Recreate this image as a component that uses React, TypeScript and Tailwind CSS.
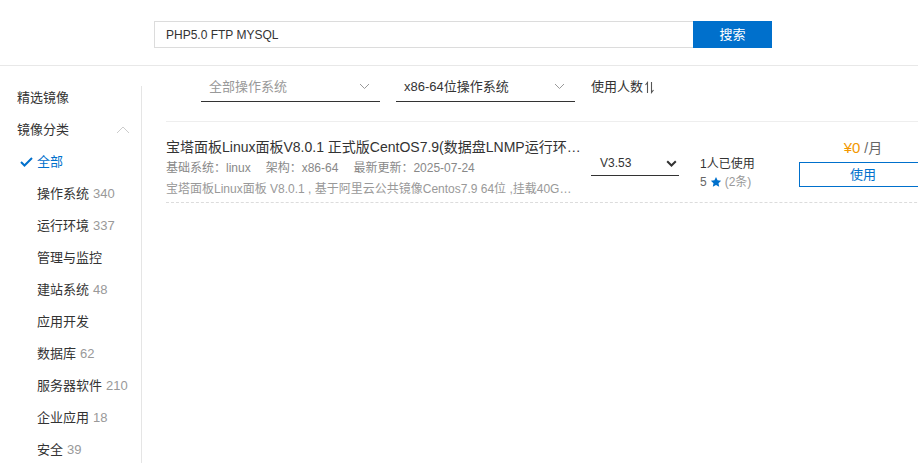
import React from 'react';

const categories = [
  { name: '操作系统', count: 340 },
  { name: '运行环境', count: 337 },
  { name: '管理与监控' },
  { name: '建站系统', count: 48 },
  { name: '应用开发' },
  { name: '数据库', count: 62 },
  { name: '服务器软件', count: 210 },
  { name: '企业应用', count: 18 },
  { name: '安全', count: 39 },
];

function ThinChevron({ className = '' }: { className?: string }) {
  return (
    <svg width="11" height="7" viewBox="0 0 11 7" className={className}>
      <path d="M1 1l4.5 4.5L10 1" fill="none" stroke="#999" strokeWidth="1" />
    </svg>
  );
}

function SortIcon() {
  return (
    <svg width="9" height="13" viewBox="0 0 9 13" className="ml-[2px]">
      <path d="M2.5 12V1.5L0.5 4" fill="none" stroke="#555" strokeWidth="1.1" />
      <path d="M6.5 1v10.5L8.5 9" fill="none" stroke="#555" strokeWidth="1.1" />
    </svg>
  );
}

export default function App() {
  return (
    <div
      className="w-[918px] h-[463px] overflow-hidden bg-white text-[#333]"
      style={{ fontFamily: '"Liberation Sans", "Noto Sans CJK SC", sans-serif' }}
    >
      {/* Search header */}
      <div className="h-[66px] border-b border-[#e8e8e8] pt-[21px] pl-[154px]">
        <div className="flex h-[27px] w-[618px]">
          <div className="flex-1 border border-[#dcdcdc] border-r-0 flex items-center pl-[11px] text-[12px] text-[#333]">
            PHP5.0 FTP MYSQL
          </div>
          <button className="w-[79px] h-full bg-[#0070cc] text-white text-[13px]">搜索</button>
        </div>
      </div>

      <div className="flex">
        {/* Sidebar */}
        <div className="w-[142px] shrink-0 mt-5 h-[400px] border-r border-[#e5e5e5]">
          <div className="-mt-1 text-[13px]">
            <div className="h-8 flex items-center pl-[17px]">精选镜像</div>
            <div className="h-8 flex items-center justify-between pl-[17px] pr-[11px]">
              <span>镜像分类</span>
              <svg width="14" height="8" viewBox="0 0 14 8">
                <path d="M1 7l6-6 6 6" fill="none" stroke="#ccc" strokeWidth="1" />
              </svg>
            </div>
            <div className="h-8 flex items-center pl-[20px] text-[#0070cc]">
              <svg width="13" height="10" viewBox="0 0 13 10" className="mr-[4px]">
                <path d="M1 5l3.5 3.5L12 1" fill="none" stroke="#0070cc" strokeWidth="2" />
              </svg>
              全部
            </div>
            {categories.map((c) => (
              <div key={c.name} className="h-8 flex items-center pl-[37px]">
                {c.name}
                {c.count !== undefined && <span className="ml-[4px] text-[#999]">{c.count}</span>}
              </div>
            ))}
          </div>
        </div>

        {/* Main */}
        <div className="w-[820px] shrink-0 pl-6">
          {/* Filters */}
          <div className="flex items-start h-[55px] pt-[6px] pl-[35px]">
            <div className="w-[179px] h-[30px] border-b border-[#333] flex items-center justify-between pl-[8px] pr-[10px] text-[13px] text-[#999]">
              <span>全部操作系统</span>
              <ThinChevron />
            </div>
            <div className="ml-[16px] w-[179px] h-[30px] border-b border-[#333] flex items-center justify-between pl-[8px] pr-[10px] text-[13px] text-[#333]">
              <span>x86-64位操作系统</span>
              <ThinChevron />
            </div>
            <div className="ml-[16px] h-[30px] flex items-center text-[13px] text-[#333]">
              使用人数
              <SortIcon />
            </div>
          </div>

          {/* List */}
          <div className="border-t border-[#eeeeee]">
            <div className="flex items-start h-[81px] border-b border-dashed border-[#dcdcdc]">
              <div className="w-[418px] shrink-0 pt-[16px]">
                <div className="text-[14px] text-[#333] truncate leading-[18px]">
                  宝塔面板Linux面板V8.0.1 正式版CentOS7.9(数据盘LNMP运行环境)
                </div>
                <div className="mt-[4px] text-[12px] text-[#888] leading-[17px] flex gap-[15px]">
                  <span>基础系统：linux</span>
                  <span>架构：x86-64</span>
                  <span>最新更新：2025-07-24</span>
                </div>
                <div className="mt-[4px] text-[12px] text-[#999] leading-[17px] truncate w-[412px]">
                  宝塔面板Linux面板 V8.0.1 , 基于阿里云公共镜像Centos7.9 64位 ,挂载40G数据盘
                </div>
              </div>

              <div className="ml-[7px] shrink-0 w-[88px] mt-[29px] h-[25px] border-b border-[#333] flex items-center justify-between pl-[9px] pr-[2px] text-[12px] text-[#333]">
                <span>V3.53</span>
                <svg width="11" height="7" viewBox="0 0 11 7">
                  <path d="M1.2 1.2l4.3 4.3 4.3-4.3" fill="none" stroke="#333" strokeWidth="2" />
                </svg>
              </div>

              <div className="ml-[21px] shrink-0 w-[99px] pt-[33px] text-[12px] leading-[18px]">
                <div className="text-[#333]">1人已使用</div>
                <div className="text-[#666] flex items-center">
                  5
                  <svg width="12" height="12" viewBox="0 0 24 24" className="mx-[3px]">
                    <path
                      d="M12 1.8l3.1 6.6 7.2.9-5.3 5 1.4 7.2L12 18l-6.4 3.5 1.4-7.2-5.3-5 7.2-.9z"
                      fill="#0070cc"
                    />
                  </svg>
                  <span className="text-[#999]">(2条)</span>
                </div>
              </div>

              <div className="shrink-0 w-[128px] pt-[17px] flex flex-col items-center">
                <div className="text-[14px] leading-[18px]">
                  <span className="text-[#f39800] text-[15px]">¥0</span>
                  <span className="text-[#666]"> /月</span>
                </div>
                <button className="mt-[5px] w-[128px] h-[25px] border border-[#0070cc] text-[#0070cc] text-[13px]">
                  使用
                </button>
              </div>
            </div>
          </div>
        </div>
      </div>
    </div>
  );
}
